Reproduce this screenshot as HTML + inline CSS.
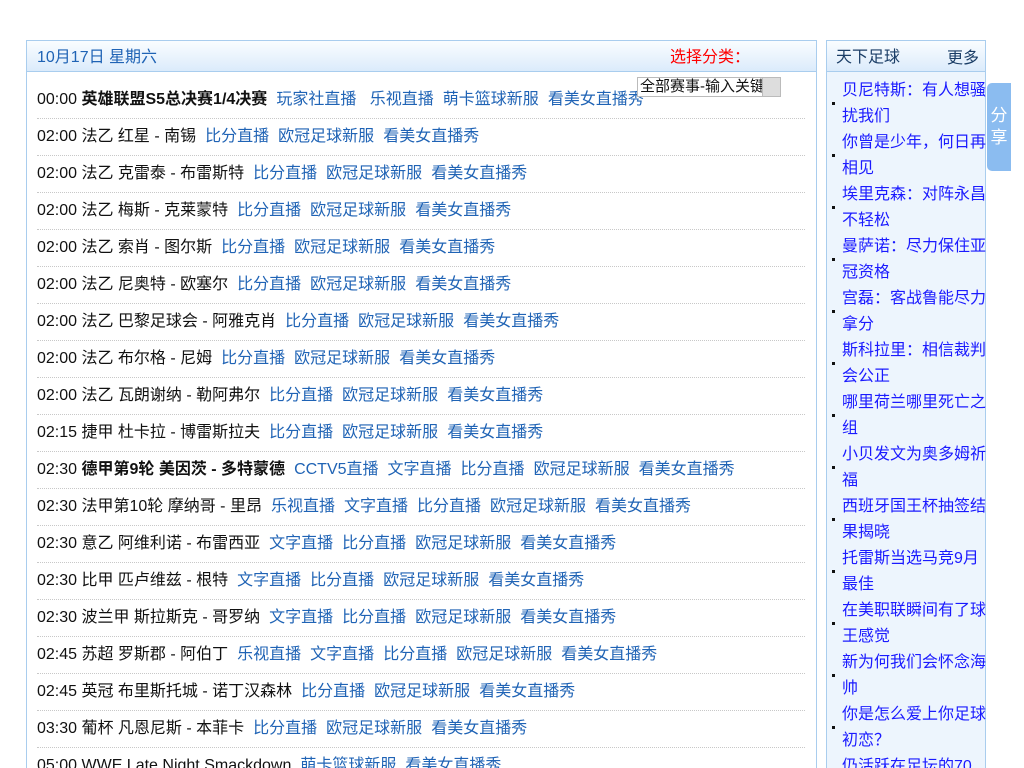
<!DOCTYPE html>
<html><head><meta charset="utf-8"><style>
*{margin:0;padding:0;box-sizing:border-box}
html,body{width:1024px;height:768px;overflow:hidden}
body{background:#fff;font-family:"Liberation Sans","Noto Sans CJK SC",sans-serif;font-size:16px;color:#111;position:relative}
#main{position:absolute;left:26px;top:40px;width:791px;height:740px;border:1px solid #a9cdee}
.hd{height:31px;background:linear-gradient(#fafdff,#dbebfb);border-bottom:1px solid #a9cdee;position:relative}
.hd .d{position:absolute;left:10px;top:2px;color:#1f63b5;font-size:16px}
.hd .s{position:absolute;left:643px;top:2px;color:#f00}
#sel{position:absolute;left:637px;top:77px;width:144px;height:20px;border:1px solid #bbb;background:#fff;font-size:15px;line-height:18px;overflow:hidden;white-space:nowrap;padding-left:2px;z-index:2}
#sel i{position:absolute;right:0;top:0;width:18px;height:18px;background:#ddd;border-left:1px solid #bbb}
#rows{position:absolute;left:10px;top:41px;width:768px}
.r{height:37px;line-height:36px;border-bottom:1px dotted #c8c8c8;white-space:nowrap}
.r a{color:#1f63b5;text-decoration:none;margin-left:9px}
b{font-weight:bold}
#side{position:absolute;left:826px;top:40px;width:160px;height:740px;border:1px solid #a9cdee;background:#edf5fd}
#side .hd .d{color:#1a3d66;left:9px}
#side .hd .m{position:absolute;left:120px;top:3px;color:#1a3d66}
#list{position:absolute;left:0;top:37px}
.it{position:relative;padding-left:15px;width:160px;line-height:26px;color:#1a1aff}
.it:before{content:"";position:absolute;left:5px;top:24px;width:3px;height:3px;background:#111}
#share{position:absolute;left:987px;top:83px;width:24px;height:88px;background:#8bbcf0;border-radius:5px 0 0 5px;color:#fff;font-size:17px;text-align:center;padding-top:22px;line-height:22px}
</style></head><body>
<div id="main"><div class="hd"><span class="d">10月17日 星期六</span><span class="s">选择分类：</span></div>
<div id="rows">
<div class="r">00:00 <b>英雄联盟S5总决赛1/4决赛</b><a>玩家社直播</a> <a>乐视直播</a><a>萌卡篮球新服</a><a>看美女直播秀</a></div>
<div class="r">02:00 法乙 红星 - 南锡<a>比分直播</a><a>欧冠足球新服</a><a>看美女直播秀</a></div>
<div class="r">02:00 法乙 克雷泰 - 布雷斯特<a>比分直播</a><a>欧冠足球新服</a><a>看美女直播秀</a></div>
<div class="r">02:00 法乙 梅斯 - 克莱蒙特<a>比分直播</a><a>欧冠足球新服</a><a>看美女直播秀</a></div>
<div class="r">02:00 法乙 索肖 - 图尔斯<a>比分直播</a><a>欧冠足球新服</a><a>看美女直播秀</a></div>
<div class="r">02:00 法乙 尼奥特 - 欧塞尔<a>比分直播</a><a>欧冠足球新服</a><a>看美女直播秀</a></div>
<div class="r">02:00 法乙 巴黎足球会 - 阿雅克肖<a>比分直播</a><a>欧冠足球新服</a><a>看美女直播秀</a></div>
<div class="r">02:00 法乙 布尔格 - 尼姆<a>比分直播</a><a>欧冠足球新服</a><a>看美女直播秀</a></div>
<div class="r">02:00 法乙 瓦朗谢纳 - 勒阿弗尔<a>比分直播</a><a>欧冠足球新服</a><a>看美女直播秀</a></div>
<div class="r">02:15 捷甲 杜卡拉 - 博雷斯拉夫<a>比分直播</a><a>欧冠足球新服</a><a>看美女直播秀</a></div>
<div class="r">02:30 <b>德甲第9轮 美因茨 - 多特蒙德</b><a>CCTV5直播</a><a>文字直播</a><a>比分直播</a><a>欧冠足球新服</a><a>看美女直播秀</a></div>
<div class="r">02:30 法甲第10轮 摩纳哥 - 里昂<a>乐视直播</a><a>文字直播</a><a>比分直播</a><a>欧冠足球新服</a><a>看美女直播秀</a></div>
<div class="r">02:30 意乙 阿维利诺 - 布雷西亚<a>文字直播</a><a>比分直播</a><a>欧冠足球新服</a><a>看美女直播秀</a></div>
<div class="r">02:30 比甲 匹卢维兹 - 根特<a>文字直播</a><a>比分直播</a><a>欧冠足球新服</a><a>看美女直播秀</a></div>
<div class="r">02:30 波兰甲 斯拉斯克 - 哥罗纳<a>文字直播</a><a>比分直播</a><a>欧冠足球新服</a><a>看美女直播秀</a></div>
<div class="r">02:45 苏超 罗斯郡 - 阿伯丁<a>乐视直播</a><a>文字直播</a><a>比分直播</a><a>欧冠足球新服</a><a>看美女直播秀</a></div>
<div class="r">02:45 英冠 布里斯托城 - 诺丁汉森林<a>比分直播</a><a>欧冠足球新服</a><a>看美女直播秀</a></div>
<div class="r">03:30 葡杯 凡恩尼斯 - 本菲卡<a>比分直播</a><a>欧冠足球新服</a><a>看美女直播秀</a></div>
<div class="r">05:00 WWE Late Night Smackdown<a>萌卡篮球新服</a><a>看美女直播秀</a></div>
</div></div>
<div id="sel">全部赛事-输入关键字<i></i></div>
<div id="side"><div class="hd"><span class="d">天下足球</span><span class="m">更多</span></div>
<div id="list">
<div class="it">贝尼特斯：有人想骚扰我们</div>
<div class="it">你曾是少年，何日再相见</div>
<div class="it">埃里克森：对阵永昌不轻松</div>
<div class="it">曼萨诺：尽力保住亚冠资格</div>
<div class="it">宫磊：客战鲁能尽力拿分</div>
<div class="it">斯科拉里：相信裁判会公正</div>
<div class="it">哪里荷兰哪里死亡之组</div>
<div class="it">小贝发文为奥多姆祈福</div>
<div class="it">西班牙国王杯抽签结果揭晓</div>
<div class="it">托雷斯当选马竞9月最佳</div>
<div class="it">在美职联瞬间有了球王感觉</div>
<div class="it">新为何我们会怀念海帅</div>
<div class="it">你是怎么爱上你足球初恋？</div>
<div class="it">仍活跃在足坛的70后球星</div>
</div></div>
<div id="share">分<br>享</div>
</body></html>
